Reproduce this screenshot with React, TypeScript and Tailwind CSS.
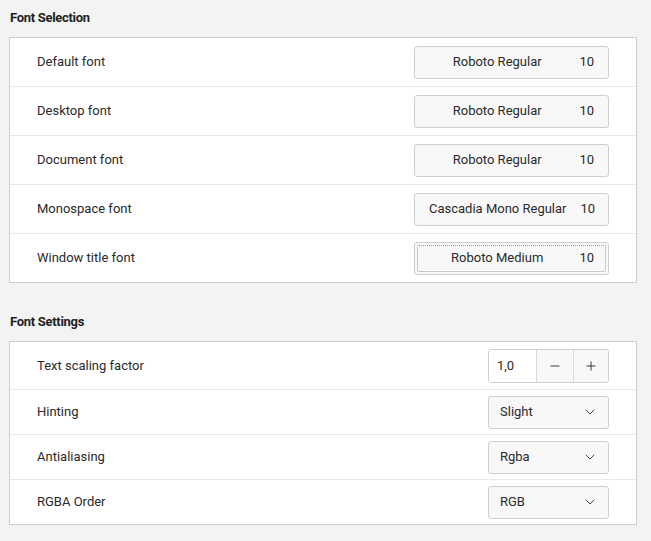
import { ChevronDown, Minus, Plus } from 'lucide-react'

interface FontRow {
  label: string
  font: string
  size: number
  focused?: boolean
}

const fontRows: FontRow[] = [
  { label: 'Default font', font: 'Roboto Regular', size: 10 },
  { label: 'Desktop font', font: 'Roboto Regular', size: 10 },
  { label: 'Document font', font: 'Roboto Regular', size: 10 },
  { label: 'Monospace font', font: 'Cascadia Mono Regular', size: 10 },
  { label: 'Window title font', font: 'Roboto Medium', size: 10, focused: true }
]

const comboRows = [
  { label: 'Hinting', value: 'Slight' },
  { label: 'Antialiasing', value: 'Rgba' },
  { label: 'RGBA Order', value: 'RGB' }
]

function FontButton({ font, size, focused }: { font: string; size: number; focused?: boolean }) {
  return (
    <button className="relative flex items-center w-[195px] h-[33px] px-[14px] gap-[14px] bg-[#f8f8f8] border border-[#cfcfcf] rounded-[3px] text-[13px] text-[#2a2a2a]">
      {focused && (
        <span className="absolute inset-[2px] border border-dotted border-[#9a9a9a] rounded-[2px]" />
      )}
      <span className="flex-1 text-center whitespace-nowrap">{font}</span>
      <span>{size}</span>
    </button>
  )
}

function Combo({ value }: { value: string }) {
  return (
    <button className="flex items-center justify-between w-[121px] h-[33px] pl-[11px] pr-[10px] bg-[#f8f8f8] border border-[#cfcfcf] rounded-[3px] text-[13px] text-[#2a2a2a]">
      <span>{value}</span>
      <ChevronDown className="w-[16px] h-[16px] text-[#3a3a3a]" strokeWidth={1.4} />
    </button>
  )
}

export default function App() {
  return (
    <div className="w-[651px] h-[541px] bg-[#f3f3f3] font-['Roboto',sans-serif] text-[#2a2a2a] overflow-hidden">
      {/* Font Selection */}
      <h2 className="pl-[10px] pt-[10px] pb-[12px] text-[13px] font-bold leading-[15px] tracking-[-0.3px] text-[#222]">
        Font Selection
      </h2>
      <div className="ml-[9px] w-[628px] bg-white border border-[#cdcdcd]">
        {fontRows.map((row, i) => (
          <div
            key={row.label}
            className={`flex items-center justify-between pl-[27px] pr-[27px] ${
              i > 0 ? 'h-[49px] border-t border-[#e8e8e8]' : 'h-[48px]'
            }`}
          >
            <span className="text-[13px]">{row.label}</span>
            <FontButton font={row.font} size={row.size} focused={row.focused} />
          </div>
        ))}
      </div>

      {/* Font Settings */}
      <h2 className="pl-[10px] pt-[31px] pb-[12px] text-[13px] font-bold leading-[15px] tracking-[-0.3px] text-[#222]">
        Font Settings
      </h2>
      <div className="ml-[9px] w-[628px] bg-white border border-[#cdcdcd]">
        <div className="flex items-center justify-between h-[47px] pl-[27px] pr-[27px]">
          <span className="text-[13px]">Text scaling factor</span>
          <div className="flex h-[34px] w-[121px] border border-[#cfcfcf] rounded-[3px] overflow-hidden text-[13px]">
            <div className="flex items-center w-[47px] pl-[8px] bg-white">1,0</div>
            <button className="flex items-center justify-center w-[37px] bg-[#f8f8f8] border-l border-[#dcdcdc]">
              <Minus className="w-[14px] h-[14px] text-[#222]" strokeWidth={1.5} />
            </button>
            <button className="flex items-center justify-center flex-1 bg-[#f8f8f8] border-l border-[#dcdcdc]">
              <Plus className="w-[14px] h-[14px] text-[#222]" strokeWidth={1.5} />
            </button>
          </div>
        </div>
        {comboRows.map((row) => (
          <div
            key={row.label}
            className="flex items-center justify-between h-[45px] pl-[27px] pr-[27px] border-t border-[#e8e8e8]"
          >
            <span className="text-[13px]">{row.label}</span>
            <Combo value={row.value} />
          </div>
        ))}
      </div>
    </div>
  )
}
